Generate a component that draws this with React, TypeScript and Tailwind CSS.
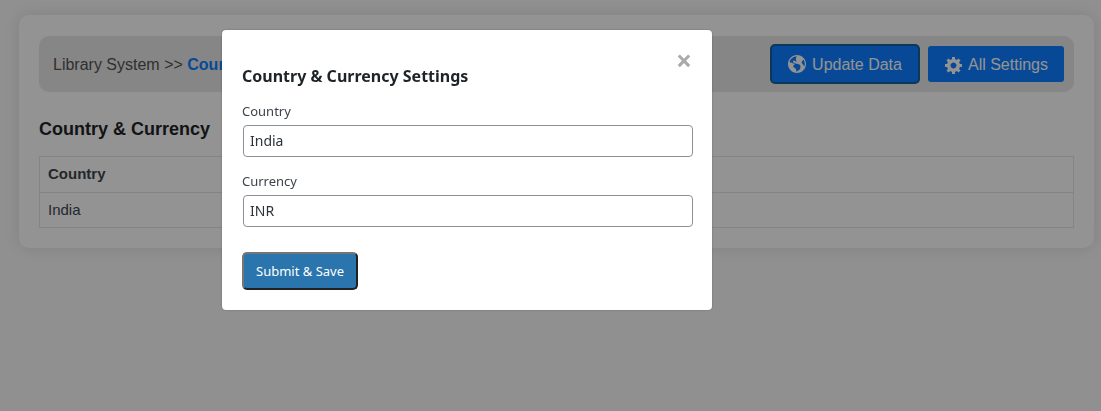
import React, { useState } from "react";

function GlobeIcon() {
  return (
    <svg viewBox="-1 -1 20 20" className="size-5 fill-current" aria-hidden="true">
      <path d="M9 0C4.03 0 0 4.03 0 9s4.03 9 9 9 9-4.03 9-9-4.03-9-9-9zm3.46 11.95c0 1.47-.8 3.3-4.06 4.7.3-4.17-2.52-3.69-3.2-5 .126-1.1.804-2.063 1.8-2.55-1.552-.266-3-.96-4.18-2 .05.47.28.904.64 1.21-.782-.295-1.458-.817-1.94-1.5.977-3.225 3.883-5.482 7.25-5.63-.84 1.38-1.5 4.13 0 5.57C7.23 7 6.26 5 5.41 5.79c-1.13 1.06.33 2.51 3.42 3.08 3.29.59 3.66 1.58 3.63 3.08zm1.34-4c-.32-1.11.62-2.23 1.69-3.14 1.356 1.955 1.67 4.45.84 6.68-.77-1.89-2.17-2.32-2.53-3.57v.03z" />
    </svg>
  );
}

function GearIcon() {
  return (
    <svg viewBox="0 0 20 20" className="size-5 fill-current" aria-hidden="true">
      <path d="M18 12h-2.18c-.17.7-.44 1.35-.81 1.93l1.54 1.54-2.1 2.1-1.54-1.54c-.58.36-1.23.63-1.91.79V19H8v-2.18c-.68-.16-1.33-.43-1.91-.79l-1.54 1.54-2.12-2.12 1.54-1.54c-.36-.58-.63-1.23-.79-1.91H1V9.03h2.17c.16-.7.44-1.35.8-1.94L2.43 5.55l2.1-2.1 1.54 1.54c.58-.37 1.24-.64 1.93-.81V2h3v2.18c.68.16 1.33.43 1.91.79l1.54-1.54 2.12 2.12-1.54 1.54c.36.59.64 1.24.8 1.94H18V12zm-8.5 1.5c1.66 0 3-1.34 3-3s-1.34-3-3-3-3 1.34-3 3 1.34 3 3 3z" />
    </svg>
  );
}

function Field({ id, label, value }: { id: string; label: string; value: string }) {
  const [text, setText] = useState(value);
  return (
    <div className="flex flex-col gap-1">
      <label htmlFor={id} className="text-[13px] leading-5 text-[#3c434a]">
        {label}
      </label>
      <input
        id={id}
        value={text}
        onChange={(e) => setText(e.target.value)}
        className="ml-px h-8 rounded border border-[#8c8f94] bg-white px-1.5 pb-0.5 text-sm text-[#2c3338]"
      />
    </div>
  );
}

function SettingsDialog() {
  return (
    <div className="fixed inset-0 bg-black/40 pt-[30px] pl-[222px]">
      <div
        role="dialog"
        aria-labelledby="dialog-title"
        className="relative w-[490px] max-w-full rounded bg-white px-5 pt-[34px] pb-5 font-['Noto_Sans',sans-serif] shadow-[0_0_2px_rgba(0,0,0,0.3)]"
      >
        <button
          type="button"
          aria-label="Close"
          className="absolute top-4 right-5 text-[28px] leading-7 font-bold text-[#aaa]"
        >
          ×
        </button>
        <h2 id="dialog-title" className="text-base leading-6 font-bold text-[#1d2327]">
          Country &amp; Currency Settings
        </h2>
        <form className="mt-[13px]" onSubmit={(e) => e.preventDefault()}>
          <div className="-mr-px flex flex-col gap-3.5">
            <Field id="country" label="Country" value="India" />
            <Field id="currency" label="Currency" value="INR" />
          </div>
          <button
            type="submit"
            className="mt-[25px] h-[38px] rounded-[5px] border-2 border-t-[#767676] border-r-[#212121] border-b-[#212121] border-l-[#767676] bg-[#2a75ad] px-3 pt-0.5 text-[13px] text-white"
          >
            Submit &amp; Save
          </button>
        </form>
      </div>
    </div>
  );
}

export default function App() {
  return (
    <div className="min-h-screen bg-[#f0f0f1] pt-[15px] pr-[7px] pl-[19px] font-['Liberation_Sans',Arial,sans-serif]">
      <main className="rounded-[10px] bg-[#f5f5f5] p-5 pt-[21px] shadow-[0_0_15px_rgba(0,0,0,0.1)]">
        <header className="flex h-14 items-center justify-between rounded-[10px] bg-[#dfdfdf] pr-2.5 pl-3.5 text-base">
          <nav className="pt-0.5 text-[#50504e]">
            Library System &gt;&gt;{" "}
            <a href="#country" className="font-bold text-[#0d7bfb]">
              Country &amp; Currency
            </a>
          </nav>
          <div className="flex items-center gap-2 text-[#f5f5f5]">
            <button
              type="button"
              className="flex h-10 items-center gap-[5px] rounded-[5px] border-2 border-[#135e96] bg-[#0d7bfb] pr-4 pl-[15px]"
            >
              <GlobeIcon />
              <span className="pt-0.5">Update Data</span>
            </button>
            <button
              type="button"
              className="flex h-9 items-center gap-1 rounded-[3px] bg-[#0d7bfb] px-4 pt-0.5"
            >
              <GearIcon />
              All Settings
            </button>
          </div>
        </header>
        <h1 id="country-heading" className="mt-6 text-lg leading-[26px] font-bold text-[#1d2327]">
          Country &amp; Currency
        </h1>
        <table
          aria-labelledby="country-heading"
          className="mt-3.5 w-full border-collapse text-left text-[15px] leading-5 text-[#3c434a]"
        >
          <thead>
            <tr>
              <th className="h-9 border border-[#dddddd] px-2 pb-0.5">Country</th>
            </tr>
          </thead>
          <tbody>
            <tr>
              <td className="h-[35px] border border-[#dddddd] px-2 pb-px">India</td>
            </tr>
          </tbody>
        </table>
      </main>
      <SettingsDialog />
    </div>
  );
}
